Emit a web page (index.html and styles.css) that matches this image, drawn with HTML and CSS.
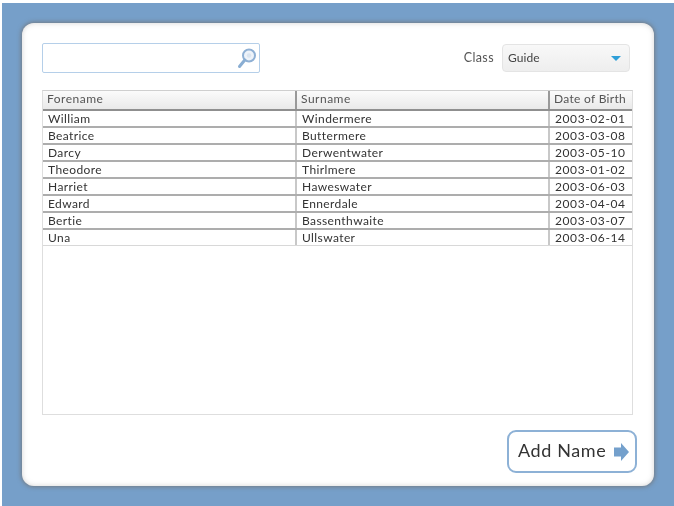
FILE: index.html
```html
<!DOCTYPE html>
<html lang="en">
<head>
<meta charset="utf-8">
<title>Names</title>
<link rel="stylesheet" href="styles.css">
</head>
<body>
<div class="screen">
  <main class="panel">
    <div class="toolbar">
      <div class="search">
        <svg class="search-icon" width="22" height="24" viewBox="0 0 22 24" aria-hidden="true">
          <circle cx="13" cy="9.5" r="6" fill="#eef3f9" stroke="#8fb0d4" stroke-width="2"/>
          <circle cx="13" cy="9.5" r="2.2" fill="#dbe5f0"/>
          <path d="M8.8 14 L3.5 20.5" stroke="#8aaed3" stroke-width="3" stroke-linecap="round"/>
        </svg>
      </div>
      <div class="class-field">
        <span class="class-label">Class</span>
        <div class="select"><span>Guide</span><i class="caret"></i></div>
      </div>
    </div>
    <div class="list">
      <div class="row head">
        <div class="cell">Forename</div><div class="cell">Surname</div><div class="cell dob">Date of Birth</div>
      </div>
      <div class="row"><div class="cell">William</div><div class="cell">Windermere</div><div class="cell date">2003-02-01</div></div>
      <div class="row"><div class="cell">Beatrice</div><div class="cell">Buttermere</div><div class="cell date">2003-03-08</div></div>
      <div class="row"><div class="cell">Darcy</div><div class="cell">Derwentwater</div><div class="cell date">2003-05-10</div></div>
      <div class="row"><div class="cell">Theodore</div><div class="cell">Thirlmere</div><div class="cell date">2003-01-02</div></div>
      <div class="row"><div class="cell">Harriet</div><div class="cell">Haweswater</div><div class="cell date">2003-06-03</div></div>
      <div class="row"><div class="cell">Edward</div><div class="cell">Ennerdale</div><div class="cell date">2003-04-04</div></div>
      <div class="row"><div class="cell">Bertie</div><div class="cell">Bassenthwaite</div><div class="cell date">2003-03-07</div></div>
      <div class="row last"><div class="cell">Una</div><div class="cell">Ullswater</div><div class="cell date">2003-06-14</div></div>
    </div>
    <div class="actions">
      <button class="add-btn" type="button"><span class="add-label">Add Name</span>
        <svg width="17" height="20" viewBox="0 0 17 20" aria-hidden="true"><path d="M1 5.5 H8 V1 L16 10 L8 19 V14.5 H1 Z" fill="#74a0cc"/></svg>
      </button>
    </div>
  </main>
</div>
</body>
</html>
```
FILE: styles.css
```css
* { box-sizing: border-box; }
html, body { margin: 0; height: 100%; background: #fff; overflow: hidden; }
body { font-family: "Lato", "Noto Sans", sans-serif; color: #333; }
.screen {
  margin: 3px 0 0 2px;
  width: 672px;
  height: 503px;
  padding: 20px;
  background: #769fc9;
  filter: blur(0.6px);
}
.panel {
  width: 632px;
  height: 463px;
  padding: 20px 21px 0 20px;
  background: #fff;
  border-radius: 12px;
  box-shadow: 0 0 4px 1px rgba(115, 115, 115, .8), inset 0 0 5px rgba(170, 170, 170, .5);
}
.toolbar { display: flex; justify-content: space-between; align-items: center; height: 30px; padding-right: 3px; }
.search {
  width: 218px;
  height: 30px;
  border: 1.5px solid #b5cfe9;
  border-radius: 2px;
  display: flex;
  justify-content: flex-end;
  align-items: center;
  padding-right: 1px;
}
.class-field { display: flex; align-items: center; gap: 8px; font-size: 12.5px; color: #555; letter-spacing: .4px; }
.class-label { position: relative; top: -1px; }
.select {
  width: 128px;
  height: 28px;
  border: 1px solid #e4e4e4;
  border-radius: 4px;
  background: linear-gradient(#f8f8f8, #eeeeee);
  display: flex;
  align-items: center;
  justify-content: space-between;
  padding: 0 8px 0 5px;
  color: #444;
  font-size: 12px;
  letter-spacing: .1px;
}
.select span { position: relative; top: -1px; }
.caret { width: 0; height: 0; border: 5px solid transparent; border-top: 5px solid #2f9fd8; border-bottom: 0; }
.list {
  margin-top: 17px;
  width: 591px;
  height: 325px;
  border: 1px solid #dedede;
  border-top-color: #cfcfcf;
}
.row {
  display: grid;
  grid-template-columns: 254px 253px 1fr;
  height: 17px;
  border-bottom: 2px solid #adadad;
  font-size: 12px;
  line-height: 15px;
  letter-spacing: .4px;
}
.row.last { border-bottom: 1px solid #d8d8d8; height: 16px; }
.cell { padding-left: 5px; border-right: 2px solid #c8c8c8; white-space: nowrap; }
.cell:last-child { border-right: 0; }
.date { letter-spacing: .6px; }
.row.head {
  height: 20px;
  background: linear-gradient(#fbfbfb, #e9e9e9);
  border-bottom: 2px solid #8f8f8f;
  line-height: 16px;
  color: #555;
}
.row.head .cell { padding-left: 4px; border-right-color: #999; letter-spacing: .5px; }
.row.head .dob { letter-spacing: .3px; }
.actions { display: flex; justify-content: flex-end; margin: 15px -4px 0 0; }
.add-btn {
  width: 130px;
  height: 43px;
  padding: 0 5px 0 9px;
  display: flex;
  align-items: center;
  justify-content: space-between;
  background: #fff;
  border: 2px solid #8db1d6;
  border-radius: 9px;
  font: 18px "Lato", "Noto Sans", sans-serif;
  letter-spacing: .6px;
  color: #333;
}
.add-label { padding-bottom: 4px; }
```
